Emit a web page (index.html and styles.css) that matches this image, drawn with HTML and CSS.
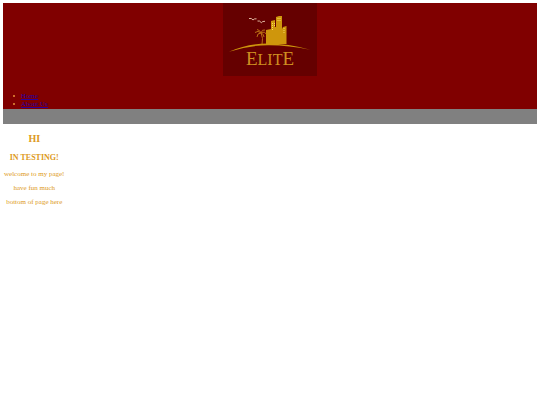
FILE: index.html
```
<!DOCTYPE html>
<html lang="en">
<head>
    <meta charset="UTF-8">
    <meta name="viewport" content="width=device-width, initial-scale=1.0">
    <title>Elite</title>
    <link rel="stylesheet" href="styles.css">
</head>
<body>
    <header class="header">
        <svg class="logo" viewBox="0 0 94 73" role="img" aria-label="Elite">
            <rect width="94" height="73" fill="#650000"/>
            <!-- birds -->
            <path class="bird" d="M26 15.500q2.500-.8 4 1.500q1-1.500 3.500-1.200M34.500 18q2.500-.6 3.800 1.700q1.200-1.700 3.700-1.400"/>
            <!-- towers -->
            <path class="gold" d="M43 41V27l5-1v-8l4-1v7h1V14l3-1h3v13l1-2 3.500-1V41z"/>
            <path class="windows" d="M49.500 20v8M51.500 20v3M55 15v3M57 15v3M61 25v5"/>
            <!-- palm tree -->
            <path class="trunk" d="M39 41.500q1.500-6-1-12"/>
            <path class="leaves" d="M38 30q-3-3-6-.5M38 30q-4 0-4 4M38 30q-1-3-4-3.500M38 30q1-4 4-3M38 30q4-2 5 1M38 30q3 1 3 4"/>
            <!-- hill -->
            <path class="gold" d="M6 48.700Q25 40.500 45 40.500T87 46.700Q65 42 45 42.200T6 48.700z"/>
            <text class="logo-text" x="47" y="62" text-anchor="middle">E<tspan class="logo-small">LIT</tspan>E</text>
        </svg>
        <nav>
            <ul class="menu">
                <li><a href="#home">Home</a></li>
                <li><a href="#about">About Us</a></li>
            </ul>
        </nav>
    </header>
    <div class="bar"></div>
    <main class="content">
        <h1>HI</h1>
        <h2>IN TESTING!</h2>
        <p>welcome to my page!</p>
        <p>have fun much</p>
        <p>bottom of page here</p>
    </main>
</body>
</html>
```
FILE: styles.css
```
body {
    margin: 3px;
    font-family: 'Liberation Serif', 'Times New Roman', serif;
    font-size: 7px;
    line-height: 8px;
    color: #dd9a22;
    background-color: #fff;
}

.header {
    background-color: #800000;
    padding-bottom: 1px;
}

.logo {
    display: block;
    width: 94px;
    margin: 0 auto;
}

.gold {
    fill: #cf960c;
}

.bird {
    fill: none;
    stroke: #e0b7a0;
    stroke-width: 1;
}

.windows {
    fill: none;
    stroke: #f5d860;
    stroke-width: 1;
    stroke-dasharray: 1 1;
}

.trunk,
.leaves {
    fill: none;
    stroke: #b96f14;
    stroke-width: 1;
}

.logo-text {
    fill: #cf8f20;
    font-size: 19px;
}

.logo-small {
    font-size: 16px;
}

.menu {
    margin: 0;
    padding: 16px 0 0 10px;
    list-style: none;
}

.menu li {
    display: flex;
    align-items: center;
    gap: 6px;
}

.menu li::before {
    content: "";
    width: 2px;
    height: 2px;
    border-radius: 50%;
    background-color: #e8903a;
}

.menu a {
    color: #2a00a0;
}

.bar {
    height: 15px;
    background-color: #808080;
}

.content {
    width: fit-content;
    padding-left: 1px;
    text-align: center;
}

h1 {
    margin: 9px 0;
    font-size: 10px;
    line-height: 11px;
}

h2 {
    margin: 7px 0 8px;
    font-size: 8px;
    line-height: 9px;
}

p {
    margin: 6px 0;
}
```
